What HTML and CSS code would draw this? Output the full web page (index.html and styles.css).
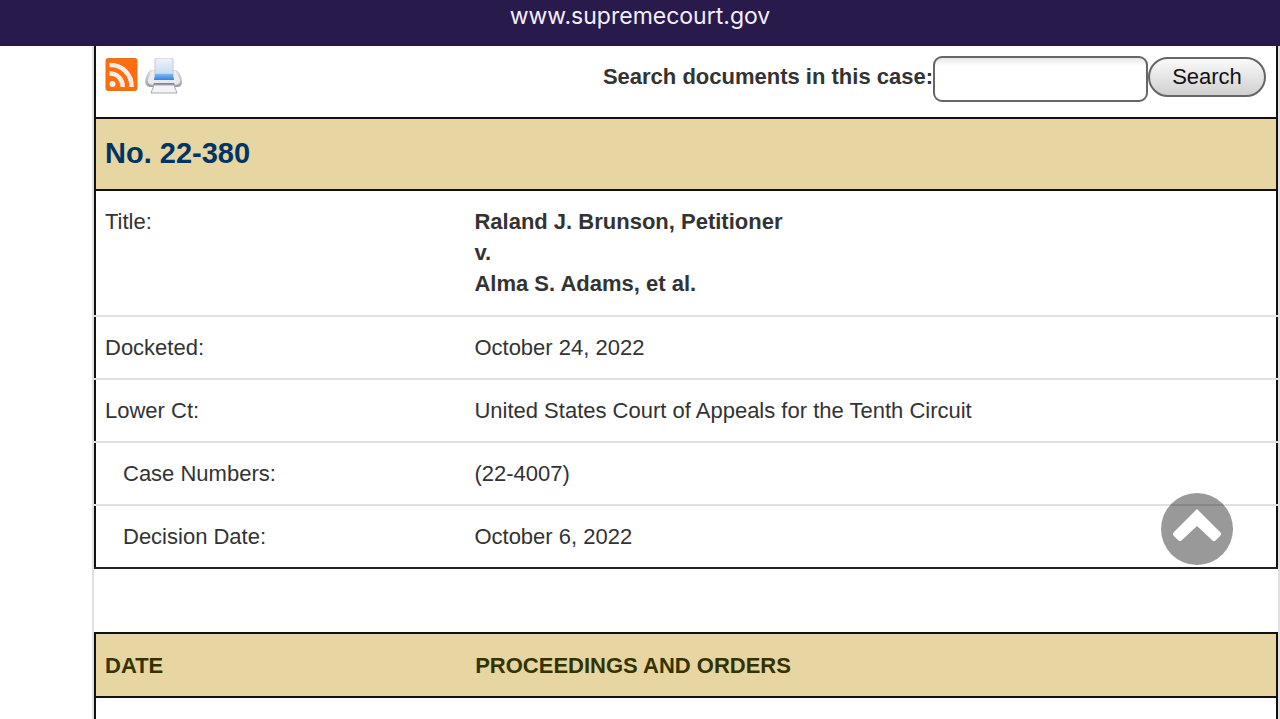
FILE: index.html
```html
<!DOCTYPE html>
<html lang="en">
<head>
<meta charset="utf-8">
<meta name="viewport" content="width=device-width, initial-scale=1">
<title>No. 22-380</title>
<link rel="stylesheet" href="styles.css">
</head>
<body>
<header class="address-bar">www.supremecourt.gov</header>
<main class="page">
  <div class="toolbar">
    <a class="icon-link" href="#rss" aria-label="RSS feed">
      <svg class="rss-icon" viewBox="0 0 32 33" aria-hidden="true">
        <rect width="32" height="33" rx="3" fill="#e9711c"/>
        <rect x="1" y="1" width="30" height="31" rx="2" fill="#ff6d0c"/>
        <circle cx="7" cy="26" r="3" fill="#f8f0ea"/>
        <path d="M4 15.5A12.5 12.5 0 0 1 17 29M4 7A21 21 0 0 1 26 29" fill="none" stroke="#f5ede6" stroke-width="4.6"/>
      </svg>
    </a>
    <a class="icon-link" href="#print" aria-label="Print">
      <svg class="print-icon" viewBox="0 0 38 36" aria-hidden="true">
        <defs>
          <linearGradient id="body" x1="0" y1="0" x2="0" y2="1"><stop offset="0" stop-color="#dcdde2"/><stop offset=".6" stop-color="#c0c1c8"/><stop offset="1" stop-color="#96979f"/></linearGradient>
          <linearGradient id="sheet" x1="0" y1="0" x2="0" y2="1"><stop offset="0" stop-color="#f0f4fa"/><stop offset=".8" stop-color="#c9def4"/><stop offset="1" stop-color="#8fbff0"/></linearGradient>
          <linearGradient id="ink" x1="0" y1="0" x2="0" y2="1"><stop offset="0" stop-color="#7cb9f5"/><stop offset="1" stop-color="#2f82e0"/></linearGradient>
        </defs>
        <path d="M6 12Q3 13 1 19Q0 21 0 24Q1 29 6 29H32Q37 29 37 24Q37 20 35 16Q33 12 31 12Z" fill="url(#body)"/>
        <path d="M6 13L3 22H9L11 13ZM27 13L29 22H35L31 13Z" fill="#ececf0"/>
        <path d="M10 1Q10 0 12 0H26Q28 0 28 2V18H10Z" fill="url(#sheet)" stroke="#c8cbd3" stroke-width="1"/>
        <path d="M10 16H28L29 22H9Z" fill="url(#ink)"/>
        <path d="M3 22H35V24Q34 27 29 27H9Q4 27 3 24Z" fill="#e9e9ed"/>
        <path d="M9 25H29L30 27H8Z" fill="#85868f"/>
        <path d="M9 27H29L32 35H6Z" fill="#f2f3f6" stroke="#a9abb3" stroke-width="1"/>
      </svg>
    </a>
    <form class="search" action="#">
      <label class="search-label" for="query">Search documents in this case:</label>
      <input class="search-input" id="query" type="text">
      <button class="search-button" type="submit">Search</button>
    </form>
  </div>
  <h1 class="case-number">No. 22-380</h1>
  <table class="docket">
    <tbody>
      <tr class="title-row"><th scope="row">Title:</th><td class="parties">Raland J. Brunson, Petitioner<br>v.<br>Alma S. Adams, et al.</td></tr>
      <tr><th scope="row">Docketed:</th><td>October 24, 2022</td></tr>
      <tr><th scope="row">Lower Ct:</th><td>United States Court of Appeals for the Tenth Circuit</td></tr>
      <tr class="sub-row"><th scope="row">Case Numbers:</th><td>(22-4007)</td></tr>
      <tr class="sub-row"><th scope="row">Decision Date:</th><td>October 6, 2022</td></tr>
    </tbody>
  </table>
  <table class="proceedings">
    <thead><tr><th scope="col">DATE</th><th scope="col">PROCEEDINGS AND ORDERS</th></tr></thead>
    <tbody><tr><td></td><td></td></tr></tbody>
  </table>
</main>
<button class="to-top" type="button" aria-label="Back to top">
  <svg class="chevron" viewBox="0 0 72 72" aria-hidden="true">
    <path d="M36 16L59.500 39.500Q61 41 59.500 42.500L54.500 47.500Q53 49 51.500 47.500L36 33L20.500 47.500Q19 49 17.500 47.500L12.500 42.500Q11 41 12.500 39.500Z" fill="#fff"/>
  </svg>
</button>
</body>
</html>
```
FILE: styles.css
```css
* { box-sizing: border-box; }
html, body { height: 100%; }
body {
  margin: 0;
  display: flex;
  flex-direction: column;
  overflow: hidden;
  background: #fff;
  color: #333;
  font: 22px/31px "Liberation Sans", Arial, sans-serif;
}
.address-bar {
  flex: none;
  height: 46px;
  padding-top: 1px;
  background: #281a4a;
  color: #f4eefc;
  font-family: "Inter", "Liberation Sans", sans-serif;
  font-size: 23px;
  text-align: center;
}
.page {
  flex: 1;
  margin-left: 92px;
  border: solid #e0e0e0;
  border-width: 0 2px;
}
.toolbar {
  display: flex;
  align-items: flex-start;
  gap: 7px;
  height: 71px;
  padding: 10px 10px 0 9px;
  border: solid #111;
  border-width: 0 2px;
}
.icon-link { display: block; padding-top: 2px; }
.rss-icon { display: block; width: 33px; height: 33px; }
.print-icon { display: block; width: 38px; height: 36px; }
.search { display: flex; align-items: flex-start; margin-left: auto; }
.search-label { padding-top: 5px; font-weight: bold; }
.search-input {
  width: 215px;
  height: 46px;
  padding: 0 10px;
  border: 2px solid #666;
  border-radius: 9px;
  background: linear-gradient(#e8e8e8, #fff 8px);
  font: inherit;
}
.search-button {
  width: 118px;
  height: 40px;
  margin-top: 1px;
  padding: 0 0 2px;
  border: 2px solid #666;
  border-radius: 20px;
  background: linear-gradient(#fafafa, #d0d0d0);
  color: #111;
  font: inherit;
}
.case-number {
  margin: 0;
  padding: 19px 9px 20px;
  border: 2px solid #111;
  background: #e7d5a2;
  color: #003366;
  font-size: 29px;
  line-height: 31px;
}
table { width: 100%; border-spacing: 0; table-layout: fixed; }
th, td { padding: 15px 11px; text-align: left; vertical-align: top; font-weight: normal; }
th:first-child, .proceedings td:first-child { width: 31.2%; }
.docket th, .docket td {
  border-bottom: 2px solid #e0e0e0;
  background: linear-gradient(#111, #111) left / 2px 100% no-repeat padding-box;
}
.docket td { background-position: right; }
.docket .title-row th, .docket .title-row td { padding-bottom: 16px; }
.docket tr:last-child th, .docket tr:last-child td { border-bottom-color: #222; }
.docket .parties { font-weight: bold; }
.docket .sub-row th { padding-left: 29px; }
.proceedings { margin-top: 63px; border: 2px solid #111; }
.proceedings th {
  padding: 16px 11px 15px;
  border-bottom: 2px solid #111;
  background: #e7d5a2;
  color: #333300;
  font-weight: bold;
}
.proceedings th:first-child { padding-left: 9px; }
.to-top {
  position: fixed;
  right: 47px;
  bottom: 154px;
  width: 72px;
  height: 72px;
  padding: 0;
  border: 0;
  border-radius: 50%;
  background: rgba(0, 0, 0, 0.4);
}
.chevron { display: block; width: 72px; height: 72px; }
```
